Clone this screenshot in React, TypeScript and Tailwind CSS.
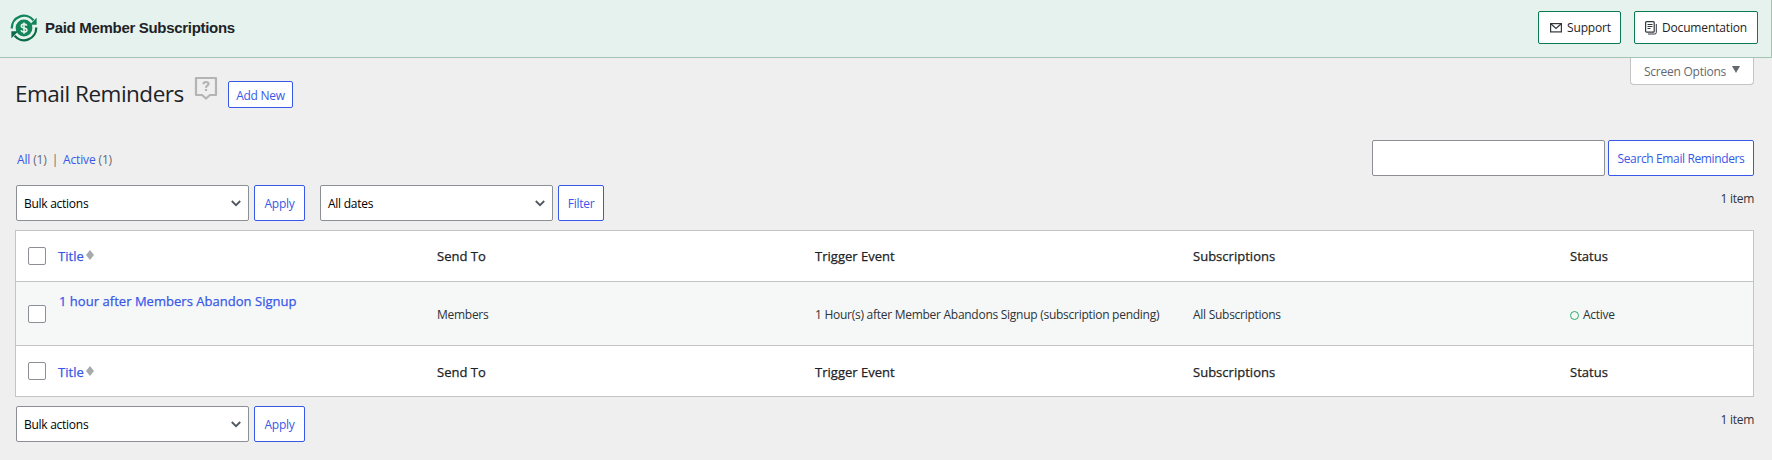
import type { ReactNode } from "react";

const columns = ["Send To", "Trigger Event", "Subscriptions", "Status"];

const grid = "grid grid-cols-[42px_379px_378px_378px_377px_1fr]";

const Logo = () => (
  <svg width="28" height="28" viewBox="0 0 28 28" fill="none">
    <circle cx="14" cy="14" r="8.4" fill="#12855a" />
    <path d="M1.8 14.5A12.2 12.2 0 0 1 23.4 6.2" stroke="#12855a" strokeWidth="2.3" />
    <path d="M26.2 13.5A12.2 12.2 0 0 1 4.6 21.8" stroke="#0b6b48" strokeWidth="2.3" />
    <path d="M26.6 3.8v7h-7z" fill="#12855a" />
    <path d="M1.4 24.2v-7h7z" fill="#0b6b48" />
    <path
      d="M16.8 11.6c-.4-1-1.4-1.5-2.8-1.5-1.6 0-2.7.7-2.7 1.9 0 2.7 5.6 1.2 5.6 4 0 1.2-1.2 2-2.9 2-1.5 0-2.6-.6-3-1.7M14 8.4v11.3"
      stroke="#e6f2ed"
      strokeWidth="1.6"
    />
  </svg>
);

const MailIcon = () => (
  <svg width="12" height="10" viewBox="0 0 12 10" fill="none" stroke="#32373c" strokeWidth="1.2">
    <rect x=".6" y=".6" width="10.8" height="8.3" />
    <path d="M1 1l5 4.5L11 1" />
  </svg>
);

const DocsIcon = () => (
  <svg width="12" height="14" viewBox="0 0 12 14" fill="none" stroke="#32373c">
    <rect x=".6" y=".6" width="8.6" height="10.6" rx="1" strokeWidth="1.2" />
    <path d="M2.5 3.5h5M2.5 5.5h5M2.5 7.5h3" />
    <path d="M11.3 3v8.5a1.5 1.5 0 0 1-1.5 1.5H3" />
  </svg>
);

const HelpIcon = () => (
  <svg width="24" height="24" viewBox="0 0 24 24" fill="none" stroke="#b4b4b4" strokeWidth="2.2">
    <path d="M2 2h20v17h-6L12 22.5 8 19H2z" strokeLinejoin="round" />
    <path d="M9.5 8.2c0-1.6 1-2.2 2.5-2.2s2.5.8 2.5 2c0 1.7-2.5 1.8-2.5 3.7M12 13v2" />
  </svg>
);

const SortIcon = () => (
  <svg className="-mt-0.5" width="8" height="10" viewBox="0 0 8 10" fill="#a7aaad">
    <path d="M4 0l4 5H0zM4 10l4-5H0z" />
  </svg>
);

const Button = ({ className = "", children }: { className?: string; children: ReactNode }) => (
  <button className={`flex items-center justify-center rounded-[2px] border border-[#3858e9] bg-white pt-0.5 text-[#3858e9] ${className}`}>
    {children}
  </button>
);

const Select = ({ label }: { label: string }) => (
  <div className="flex h-9 w-[233px] items-center justify-between rounded-[2px] border border-[#8c8f94] bg-white px-[7px] text-black">
    <span className="pt-0.5">{label}</span>
    <svg width="10" height="7" viewBox="0 0 10 7" fill="none" stroke="#50575e" strokeWidth="1.8">
      <path d="M.8 1L5 5.2 9.2 1" />
    </svg>
  </div>
);

const Checkbox = () => <div className="size-[18px] rounded-[2px] border border-[#8c8f94] bg-white" />;

const HeadRow = ({ labelClass = "" }: { labelClass?: string }) => (
  <div className={`${grid} h-[50px] items-center bg-white text-[13px] tracking-[0.02px] text-[#1d2327] [-webkit-text-stroke:0.25px]`}>
    <div className="pl-3">
      <Checkbox />
    </div>
    <div className={`flex items-center gap-0.5 text-[#3858e9] ${labelClass}`}>
      Title <SortIcon />
    </div>
    {columns.map((c) => (
      <div key={c} className={labelClass}>
        {c}
      </div>
    ))}
  </div>
);

const App = () => {
  return (
    <div className="h-[460px] bg-[#efefef] font-['Open_Sans','Noto_Sans',sans-serif] text-[12px] leading-[18px] tracking-[-0.27px] text-[#2c3338]">
      {/* plugin banner */}
      <header className="flex h-[58px] items-center border-r border-b border-[#a3c4b5] bg-[#e6f2ed] pr-[13px] pl-[10px]">
        <div className="-mt-0.5">
          <Logo />
        </div>
        <h2 className="-mt-0.5 ml-[7px] font-['Liberation_Sans',Arial,sans-serif] text-[15px] font-bold tracking-[-0.31px] text-[#1d2327]">
          Paid Member Subscriptions
        </h2>
        <div className="-mt-0.5 ml-auto flex gap-[13px] tracking-[-0.15px] text-[#1d2327]">
          <a className="flex h-[33px] w-[83px] items-center justify-center gap-[5px] rounded-[2px] border border-[#0b7a50] bg-white pl-0.5">
            <MailIcon /> Support
          </a>
          <a className="flex h-[33px] w-[124px] items-center justify-center gap-[5px] rounded-[2px] border border-[#0b7a50] bg-white">
            <DocsIcon /> Documentation
          </a>
        </div>
      </header>

      <main className="pr-[18px] pl-[15px]">
        {/* page title + screen options */}
        <div className="flex h-[82px] items-start">
          <h1 className="mt-[19px] w-[180px] text-[22.5px] leading-[34px] tracking-[-0.5px] whitespace-nowrap text-[#1d2327]">Email Reminders</h1>
          <div className="mt-[18px] -ml-px w-[34px]">
            <HelpIcon />
          </div>
          <Button className="mt-[23px] h-[27px] w-[65px]">Add New</Button>
          <div className="ml-auto flex h-[27px] w-[124px] items-center justify-center gap-1.5 rounded-b border border-t-0 border-[#c3c4c7] bg-white tracking-[-0.25px] text-[#646970]">
            <span className="pt-0.5">Screen Options</span>
            <svg className="-mt-1" width="8" height="7" viewBox="0 0 8 7" fill="#646970">
              <path d="M0 0h8L4 7z" />
            </svg>
          </div>
        </div>

        <div className="flex h-[45px] justify-between">
          <p className="mt-[11px] ml-0.5 tracking-[-0.15px] text-[#646970]">
            <a className="text-[#3858e9]">All</a> (1) <span className="mx-0.5">|</span> <a className="text-[#3858e9]">Active</a> (1)
          </p>
          <div className="flex gap-[3px]">
            <input className="h-9 w-[233px] rounded-[2px] border border-[#8c8f94] bg-white" />
            <Button className="h-9 w-[146px] tracking-[-0.37px]">Search Email Reminders</Button>
          </div>
        </div>

        <div className="flex h-[45px] pl-px">
          <Select label="Bulk actions" />
          <Button className="ml-[5px] h-9 w-[51px]">Apply</Button>
          <div className="ml-[15px]">
            <Select label="All dates" />
          </div>
          <Button className="ml-[5px] h-9 w-[46px]">Filter</Button>
          <span className="mt-[5px] ml-auto">1 item</span>
        </div>

        {/* reminders table */}
        <div className="border border-[#c3c4c7]">
          <HeadRow />
          <div className={`${grid} h-[65px] items-center border-y border-[#c3c4c7] bg-[#f6f7f7]`}>
            <div className="pl-3">
              <Checkbox />
            </div>
            <div className="self-start pt-[10px] pl-px text-[13px] tracking-[0.03px] text-[#3858e9] [-webkit-text-stroke:0.25px]">
              1 hour after Members Abandon Signup
            </div>
            <div className="pt-[3px]">Members</div>
            <div className="pt-[3px]">1 Hour(s) after Member Abandons Signup (subscription pending)</div>
            <div className="pt-[3px]">All Subscriptions</div>
            <div className="flex items-center gap-1 pt-[3px]">
              <span className="size-[9px] rounded-full border border-[#27ae60]" />
              Active
            </div>
          </div>
          <HeadRow labelClass="pt-0.5" />
        </div>

        <div className="mt-[9px] flex pl-px">
          <Select label="Bulk actions" />
          <Button className="ml-[5px] h-9 w-[51px]">Apply</Button>
          <span className="mt-[5px] ml-auto">1 item</span>
        </div>
      </main>
    </div>
  );
};

export default App;
